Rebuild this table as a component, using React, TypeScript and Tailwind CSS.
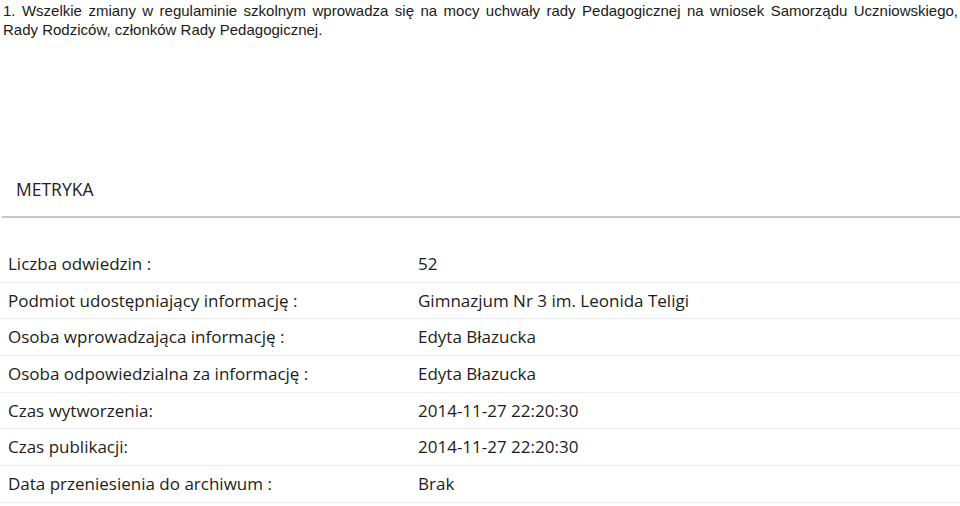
export default function App() {
  const rows: [string, string][] = [
    ["Liczba odwiedzin :", "52"],
    ["Podmiot udostępniający informację :", "Gimnazjum Nr 3 im. Leonida Teligi"],
    ["Osoba wprowadzająca informację :", "Edyta Błazucka"],
    ["Osoba odpowiedzialna za informację :", "Edyta Błazucka"],
    ["Czas wytworzenia:", "2014-11-27 22:20:30"],
    ["Czas publikacji:", "2014-11-27 22:20:30"],
    ["Data przeniesienia do archiwum :", "Brak"],
  ];

  return (
    <div className="w-[960px] h-[506px] overflow-hidden bg-white text-[#111]">
      <div
        className="text-[15px] leading-[19px] pt-[1px] pl-[3px] pr-[2px] text-[#1a1a1a]"
        style={{ fontFamily: '"Liberation Sans", Arial, sans-serif' }}
      >
        <p className="text-justify [text-align-last:justify]">
          1. Wszelkie zmiany w regulaminie szkolnym wprowadza się na mocy uchwały rady Pedagogicznej na wniosek Samorządu Uczniowskiego,
        </p>
        <p>Rady Rodziców, członków Rady Pedagogicznej.</p>
      </div>

      <div style={{ fontFamily: '"Open Sans", sans-serif' }}>
        <h2 className="mt-[138px] pl-4 text-[17.5px] leading-6 text-[#222]">METRYKA</h2>
        <div className="mt-[15px] ml-[2px] h-[2px] bg-[#c4c8cb]" />

        <div className="mt-[28px]">
          {rows.map(([label, value]) => (
            <div key={label} className="grid grid-cols-[418px_1fr] h-[36.67px] items-center border-b border-[#ececec] text-[17px] text-[#1c1c1c]">
              <span className="pl-2">{label}</span>
              <span>{value}</span>
            </div>
          ))}
        </div>
      </div>
    </div>
  );
}
